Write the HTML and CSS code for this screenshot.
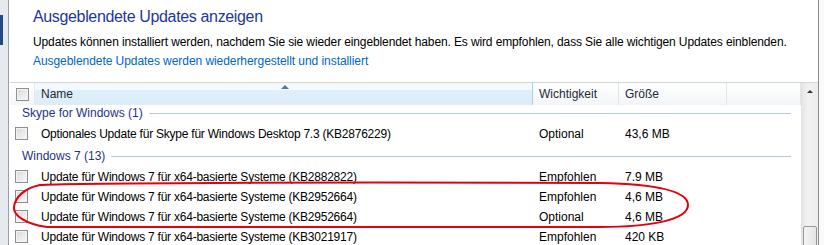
FILE: index.html
```html
<!DOCTYPE html>
<html lang="de">
<head>
  <meta charset="UTF-8">
  <title>Ausgeblendete Updates anzeigen</title>
  <link rel="stylesheet" href="styles.css">
</head>
<body>

  <div class="window">
    <div class="nav"><span class="nav-mark"></span></div>

    <div class="pane">
      <div class="intro">
        <h1>Ausgeblendete Updates anzeigen</h1>
        <p class="desc">Updates können installiert werden, nachdem Sie sie wieder eingeblendet haben. Es wird empfohlen, dass Sie alle wichtigen Updates einblenden.</p>
        <a class="link" href="#">Ausgeblendete Updates werden wiederhergestellt und installiert</a>
      </div>

      <div class="list">
        <div class="list-body">
          <div class="head">
            <div class="cell cb-cell"><span class="cb"></span></div>
            <div class="cell sorted">Name<span class="sort-arrow"></span></div>
            <div class="cell">Wichtigkeit</div>
            <div class="cell">Größe</div>
            <div class="cell"></div>
          </div>

          <div class="group"><span>Skype for Windows (1)</span><i></i></div>
          <div class="row">
            <div class="cell cb-cell"><span class="cb"></span></div>
            <div class="cell name">Optionales Update für Skype für Windows Desktop 7.3 (KB2876229)</div>
            <div class="cell">Optional</div>
            <div class="cell">43,6 MB</div>
          </div>

          <div class="group"><span>Windows 7 (13)</span><i></i></div>
          <div class="row">
            <div class="cell cb-cell"><span class="cb"></span></div>
            <div class="cell name">Update für Windows 7 für x64-basierte Systeme (KB2882822)</div>
            <div class="cell">Empfohlen</div>
            <div class="cell">7.9 MB</div>
          </div>
          <div class="row">
            <div class="cell cb-cell"><span class="cb"></span></div>
            <div class="cell name">Update für Windows 7 für x64-basierte Systeme (KB2952664)</div>
            <div class="cell">Empfohlen</div>
            <div class="cell">4,6 MB</div>
          </div>
          <div class="row">
            <div class="cell cb-cell"><span class="cb"></span></div>
            <div class="cell name">Update für Windows 7 für x64-basierte Systeme (KB2952664)</div>
            <div class="cell">Optional</div>
            <div class="cell">4,6 MB</div>
          </div>
          <div class="row">
            <div class="cell cb-cell"><span class="cb"></span></div>
            <div class="cell name">Update für Windows 7 für x64-basierte Systeme (KB3021917)</div>
            <div class="cell">Empfohlen</div>
            <div class="cell">420 KB</div>
          </div>
        </div>

        <div class="scrollbar">
          <span class="arrow-up"></span>
          <span class="thumb"></span>
        </div>
      </div>
    </div>

    <div class="edge"></div>
  </div>

  <!-- hand-drawn marker around the two KB2952664 rows -->
  <svg class="marker" width="824" height="245" viewBox="0 0 824 245">
    <path d="M40 185 C60 183 300 182 600 183 C650 184 688 190 688 205 C688 220 650 227 600 227 L47 227 C25 224 13 215 14 207 C15 197 25 188 40 185 Z"
          fill="none" stroke="#e4000f" stroke-width="2"/>
  </svg>

</body>
</html>
```

FILE: styles.css
```css
body { margin: 0; height: 245px; overflow: hidden; background: #fff; font-family: "Liberation Sans", Arial, sans-serif; font-size: 12px; color: #000; }

.window { display: flex; height: 245px; }
.nav { width: 8px; border-right: 1px solid #9a9ea3; background: #e6e9ed; }
.nav-mark { display: block; width: 3px; height: 30px; margin-top: 15px; background: #1f4a86; }
.pane { width: 809px; display: flex; flex-direction: column; }
.edge { flex: 1; border-left: 1px solid #8a8a8a; background: #fafafa; }

.intro { flex-shrink: 0; padding: 7px 0 0 24px; height: 82px; box-sizing: border-box; }
h1 { margin: 0; font-size: 16px; font-weight: normal; color: #1e3799; line-height: 20px; letter-spacing: -0.35px; }
.desc { margin: 7px 0 0; line-height: 16px; letter-spacing: -0.12px; }
.link { display: block; margin-top: 3px; color: #0066cc; text-decoration: none; line-height: 16px; letter-spacing: -0.06px; }

.list { display: flex; margin-left: 1px; flex: 1; min-height: 0; overflow: hidden; border-top: 1px solid #d5d5d5; }
.list-body { width: 792px; }

.head, .row { display: grid; grid-template-columns: 25px 498px 86px 108px 1fr; }
.cell { padding-left: 6px; white-space: nowrap; }
.name { letter-spacing: -0.23px; }
.head { height: 22px; line-height: 22px; background: linear-gradient(#ffffff, #f3f4f6); color: #1e2a3a; }
.head .cell { border-right: 1px solid #e3e6ea; position: relative; }
.head .cb-cell { border-right-color: #e8e8e8; }
.head .cb-cell .cb { margin-top: 5px; }
.head .sorted { background: linear-gradient(#f3f9fd 0, #f3f9fd 30%, #e0f0fa 31%, #dcedf8 100%); border-right-color: #9fd3f1; }
.sort-arrow { position: absolute; left: 246px; top: 2px; width: 0; height: 0; border-left: 4px solid transparent; border-right: 4px solid transparent; border-bottom: 4px solid #4e7ba0; }

.cb { display: inline-block; width: 11px; height: 11px; border: 1px solid #8e8f8f; vertical-align: top; background: linear-gradient(135deg, #d6d9dd, #f9f9f9); box-shadow: inset 0 0 0 1px #f4f4f4; }
.row .cb-cell { padding-left: 5px; }
.row .cb { margin-top: 3px; }

.group { display: flex; align-items: center; height: 16px; padding-left: 12px; color: #1e3287; }
.group i { flex: 1; height: 1px; margin: 1px 10px 0 6px; background: #b7c7df; }
.row { height: 20px; line-height: 20px; }
.group + .row { margin-top: 3px; }
.row + .group { margin-top: 4px; }

.scrollbar { width: 16px; position: relative; background: linear-gradient(90deg, #e6e6e6, #f2f2f2 40%, #ececec); border-left: 1px solid #e2e2e2; }
.arrow-up { position: absolute; left: 5px; top: 7px; width: 0; height: 0; border-left: 3px solid transparent; border-right: 3px solid transparent; border-bottom: 3px solid #333; }
.thumb { position: absolute; left: 1px; top: 143px; width: 12px; height: 30px; border: 1px solid #989898; border-radius: 2px; background: linear-gradient(90deg, #f4f4f4, #e4e4e4); }

.marker { position: absolute; left: 0; top: 0; pointer-events: none; }
```
